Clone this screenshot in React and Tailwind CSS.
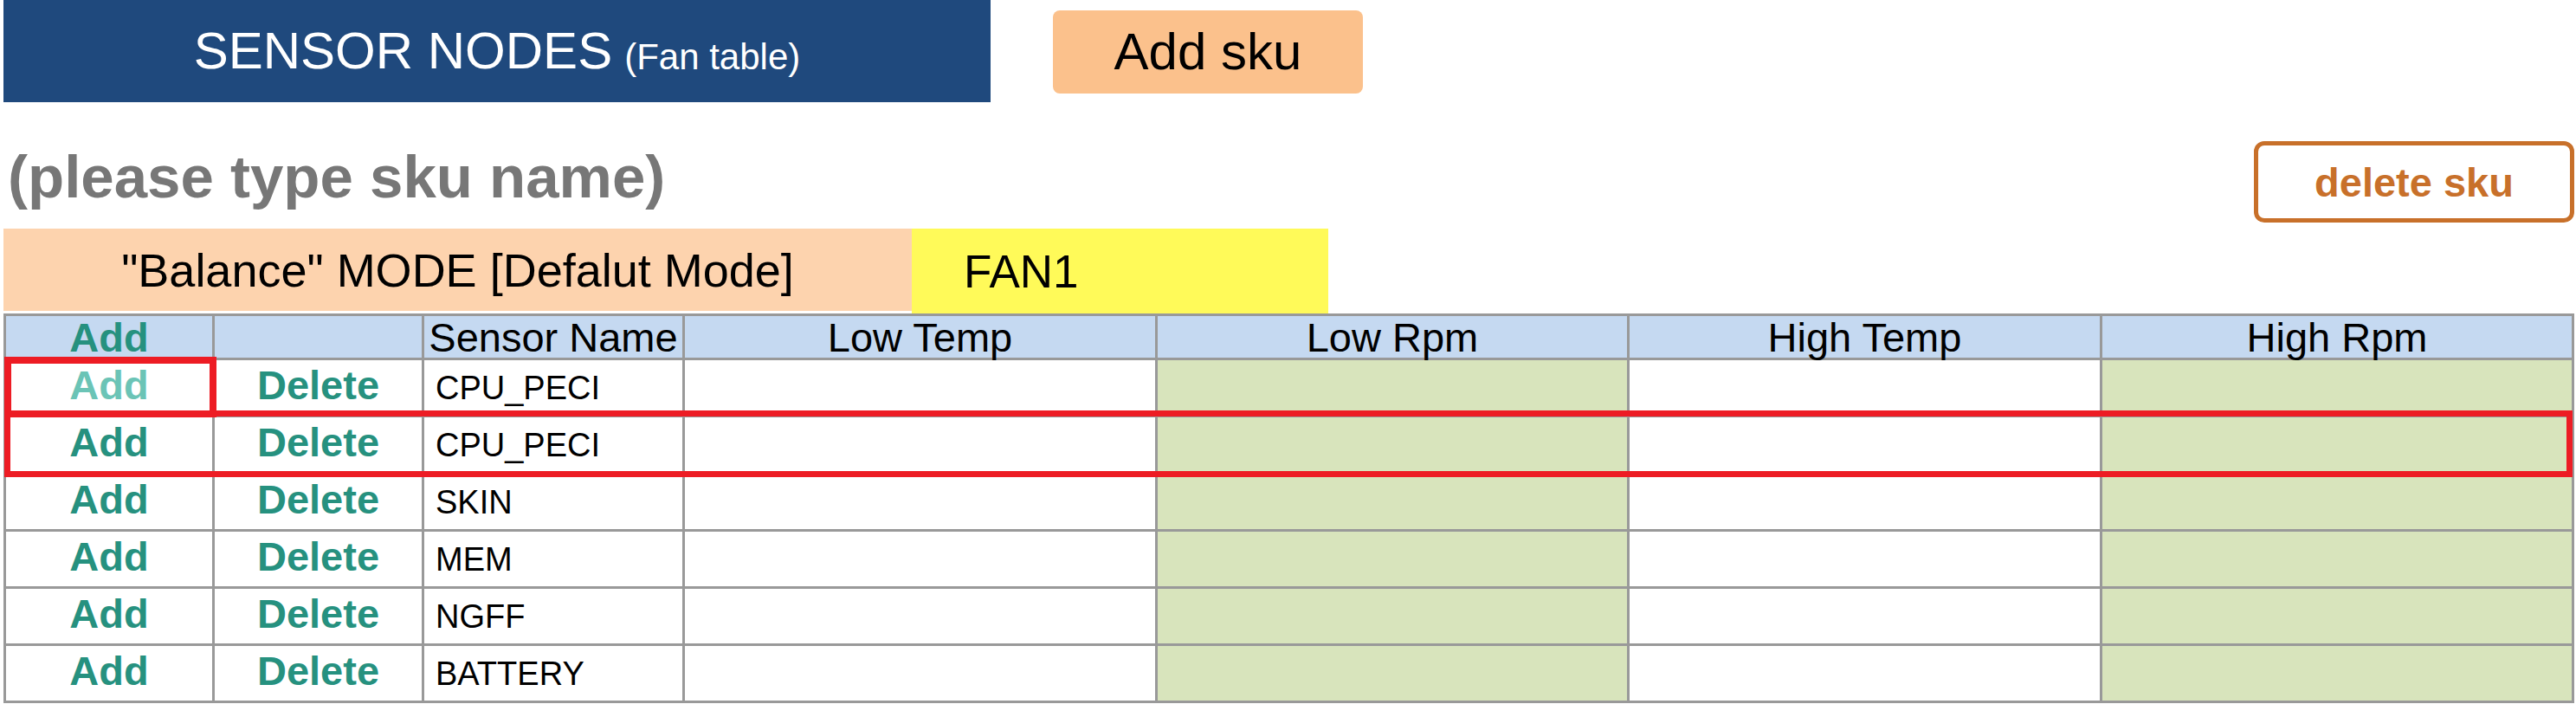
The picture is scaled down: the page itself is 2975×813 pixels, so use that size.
import React from 'react'

const SENSORS = ['CPU_PECI', 'CPU_PECI', 'SKIN', 'MEM', 'NGFF', 'BATTERY']
const HEAD = ['Low Temp', 'Low Rpm', 'High Temp', 'High Rpm']

export default function App() {
  return (
    <div className="w-[2975px] h-[813px] bg-white overflow-hidden font-['Liberation_Sans',Arial,sans-serif] leading-none">

      {/* Title + add sku */}
      <div className="flex items-start h-[118px]">
        <div className="ml-[4px] w-[1140px] h-[118px] bg-[#1f497d] text-white flex items-center justify-center">
          <span className="text-[60px]">SENSOR NODES</span>
          <span className="text-[42px] ml-[14px] mt-[14px]">(Fan table)</span>
        </div>
        <button className="ml-[72px] mt-[12px] w-[358px] h-[96px] rounded-[8px] bg-[#fbc18c] text-black text-[60px] flex items-center justify-center">
          Add sku
        </button>
      </div>

      {/* sku name + delete sku */}
      <div className="flex items-start justify-between h-[146px]">
        <div className="ml-[9px] mt-[52px] text-[69px] font-bold text-[#777777]">(please type sku name)</div>
        <button className="mt-[45px] mr-[2px] w-[370px] h-[94px] rounded-[12px] border-[5px] border-[#c8702a] bg-white text-[#c8702a] text-[47px] font-bold flex items-center justify-center">
          delete sku
        </button>
      </div>

      {/* Mode bar */}
      <div className="flex items-start ml-[4px] h-[98px]">
        <div className="w-[1049px] h-[95px] bg-[#fdd3ae] flex items-center justify-center text-[54px] text-black">
          "Balance" MODE [Defalut Mode]
        </div>
        <div className="w-[481px] h-[98px] bg-[#fffa59] flex items-center pl-[60px] text-[53px] text-black">
          FAN1
        </div>
      </div>

      {/* Table */}
      <div className="relative ml-[4px] w-[2969px] bg-[#999999] p-[3px] grid gap-[3px] grid-cols-[238px_239px_298px_543px_542px_543px_542px]">
        <div className="h-[48px] bg-[#c5d9f1] flex items-center justify-center text-[47px] font-bold text-[#26917f]">Add</div>
        <div className="h-[48px] bg-[#c5d9f1]" />
        <div className="h-[48px] bg-[#c5d9f1] flex items-center justify-center text-[47px] text-black">Sensor Name</div>
        {HEAD.map(h => (
          <div key={h} className="h-[48px] bg-[#c5d9f1] flex items-center justify-center text-[47px] text-black">{h}</div>
        ))}

        {SENSORS.map((s, i) => (
          <React.Fragment key={i}>
            <div className={`h-[63px] pb-[6px] bg-white flex items-center justify-center text-[47px] font-bold ${i === 0 ? 'text-[#6bc4b6]' : 'text-[#26917f]'}`}>Add</div>
            <div className="h-[63px] pb-[6px] bg-white flex items-center justify-center text-[47px] font-bold text-[#26917f]">Delete</div>
            <div className="h-[63px] bg-white flex items-center pl-[13px] text-[38px] text-black">{s}</div>
            <div className="h-[63px] bg-white" />
            <div className="h-[63px] bg-[#d8e4bc]" />
            <div className="h-[63px] bg-white" />
            <div className="h-[63px] bg-[#d8e4bc]" />
          </React.Fragment>
        ))}

        {/* highlight boxes */}
        <div className="absolute left-[1px] top-[50px] w-[245px] h-[70px] border-[8px] border-[#ed1c24]" />
        <div className="absolute left-[1px] top-[112px] w-[2966px] h-[77px] border-[7px] border-[#ed1c24]" />
      </div>
    </div>
  )
}
